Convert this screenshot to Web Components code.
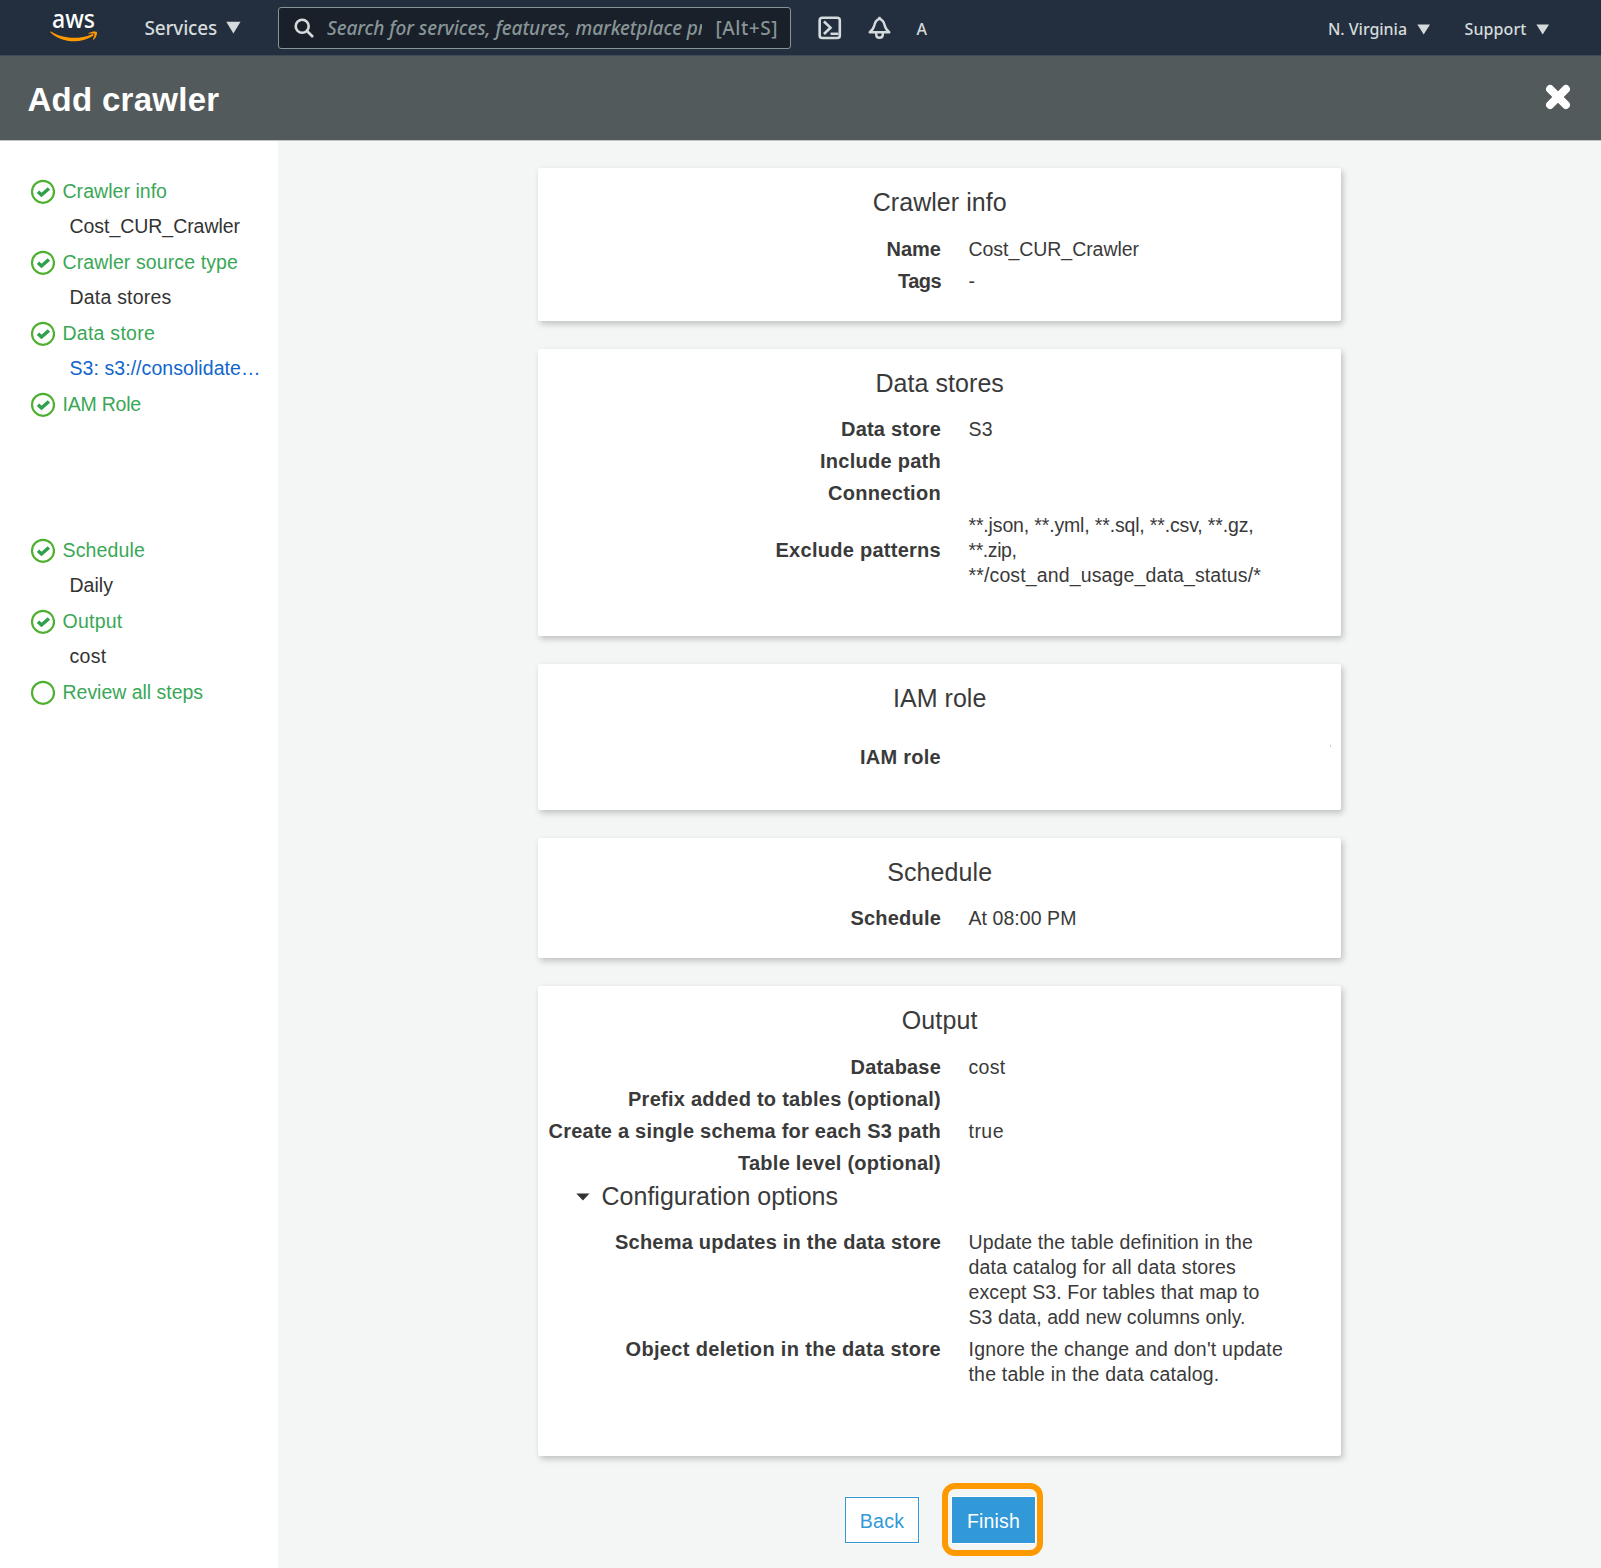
<!DOCTYPE html>
<html lang="en">
<head>
<meta charset="utf-8">
<title>Add crawler</title>
<style>
html,body{margin:0;padding:0;background:#f4f6f6}
body{font-family:"Liberation Sans",Arial,sans-serif;font-size:19.5px;line-height:25px;color:#3a3a3a}
</style>
</head>
<body>
<crawler-page></crawler-page>
<script>
function define(name, html, setup) {
  customElements.define(name, class extends HTMLElement {
    connectedCallback() {
      if (this.shadowRoot) return;
      const t = document.createElement('template');
      t.innerHTML = typeof html === 'function' ? html(this) : html;
      this.attachShadow({mode: 'open'}).appendChild(t.content.cloneNode(true));
      if (setup) setup(this);
    }
  });
}

define('crawler-page', `
<style>
:host{display:flex;flex-direction:column;width:1601px;height:1568px;overflow:hidden}
.body{display:flex;flex:1;min-height:0}
main{flex:1;display:flex;flex-direction:column;padding:27px 0 0 260px;gap:28px;background:#f4f6f6}
.actions{display:flex;align-items:center;padding-left:307px;margin-top:-1px;height:73px;gap:23px}
</style>
<top-nav></top-nav>
<page-header></page-header>
<div class="body">
  <step-list>
    <step-item label="Crawler info" w="104.5" sub="Cost_CUR_Crawler" sw="170.5"></step-item>
    <step-item label="Crawler source type" w="175.5" sub="Data stores" sw="102"></step-item>
    <step-item label="Data store" w="92.5" sub="S3: s3://consolidate…" sw="191" link></step-item>
    <step-item label="IAM Role" w="78.5" style="height:146px"></step-item>
    <step-item label="Schedule" w="82.5" sub="Daily" sw="43.5"></step-item>
    <step-item label="Output" w="60" sub="cost" sw="37"></step-item>
    <step-item label="Review all steps" w="140.5" open></step-item>
  </step-list>
  <main>
    <review-card heading="Crawler info" w="134" style="height:153px">
      <detail-row label="Name" w="54.5"><fit-text w="170.5">Cost_CUR_Crawler</fit-text></detail-row>
      <detail-row label="Tags" w="43"><fit-text>-</fit-text></detail-row>
    </review-card>
    <review-card heading="Data stores" w="128.5" style="height:287px;--head-gap:19px">
      <detail-row label="Data store" w="100"><fit-text w="24.5">S3</fit-text></detail-row>
      <detail-row label="Include path" w="121"></detail-row>
      <detail-row label="Connection" w="113"></detail-row>
      <detail-row label="Exclude patterns" w="165.5" middle><fit-text w="285">**.json, **.yml, **.sql, **.csv, **.gz,</fit-text><fit-text w="48">**.zip,</fit-text><fit-text w="292.5">**/cost_and_usage_data_status/*</fit-text></detail-row>
    </review-card>
    <review-card heading="IAM role" w="93.5" style="height:146px;--head-gap:32px">
      <detail-row label="IAM role" w="81" speck></detail-row>
    </review-card>
    <review-card heading="Schedule" w="105" style="height:120px;--head-gap:19px">
      <detail-row label="Schedule" w="90.5"><fit-text w="108">At 08:00 PM</fit-text></detail-row>
    </review-card>
    <review-card heading="Output" w="76" style="height:470px">
      <detail-row label="Database" w="90.5"><fit-text w="37">cost</fit-text></detail-row>
      <detail-row label="Prefix added to tables (optional)" w="313"></detail-row>
      <detail-row label="Create a single schema for each S3 path" w="392.5"><fit-text w="35.5">true</fit-text></detail-row>
      <detail-row label="Table level (optional)" w="203"></detail-row>
      <config-toggle></config-toggle>
      <detail-row label="Schema updates in the data store" w="326"><fit-text w="284.500">Update the table definition in the</fit-text><fit-text w="267.500">data catalog for all data stores</fit-text><fit-text w="291">except S3. For tables that map to</fit-text><fit-text w="277">S3 data, add new columns only.</fit-text></detail-row>
      <detail-row label="Object deletion in the data store" w="315.5"><fit-text w="314.500">Ignore the change and don't update</fit-text><fit-text w="251">the table in the data catalog.</fit-text></detail-row>
    </review-card>
    <div class="actions">
      <action-button style="width:74px"><fit-text w="44.5">Back</fit-text></action-button>
      <action-button primary><fit-text w="53">Finish</fit-text></action-button>
    </div>
  </main>
</div>`);

define('top-nav', `
<style>
:host{display:flex;height:55px;background:#232f3e;border-bottom:1px solid #3e4a55;box-sizing:content-box;color:#d5dbdb;
 font-family:"Noto Sans","Open Sans",sans-serif;font-weight:500;font-size:19px;line-height:24px;align-items:center}
.logo{display:block;margin-left:50px;width:50px;flex:none}
svg{display:block;flex:none}
.services{margin-left:44.5px}
.search{display:flex;align-items:center;box-sizing:border-box;width:513px;height:42px;margin:1px 0 0 37px;border:1.5px solid #879596;border-radius:3px;background:#1a202a;color:#879596;padding-left:15px;flex:none}
.ph{width:374.500px;margin-left:12px;overflow:hidden;white-space:nowrap;font-style:italic}
.key{margin-left:14px}
.small{font-size:16px;margin-top:2px}
</style>
<svg class="logo" height="55" viewBox="0 0 50 55">
 <text x="2" y="28" font-family="Noto Sans, Open Sans, sans-serif" font-weight="500" font-size="25" textLength="43" lengthAdjust="spacingAndGlyphs" fill="#fff">aws</text>
 <path d="M1 31.6C10 38 28 40.5 41.8 34.2C43.5 33.6 44.3 35 42.8 36C30 44.5 10.500 42.500 .5 32.500C0 31.700 .3 31.200 1 31.600Z" fill="#ff9900"/>
 <path d="M38.600 33.100C41.500 31.200 46 31 46.800 31.900C47.500 32.900 46.500 37.200 43.700 39.600C43.200 40 42.800 39.700 43 39.100C43.800 37.200 44.900 34.600 44.300 33.900C43.700 33.200 41 33.500 39.100 33.800C38.400 33.900 38.100 33.500 38.600 33.100Z" fill="#ff9900"/>
</svg>
<fit-text class="services" w="72.500">Services</fit-text>
<svg style="margin-left:9px" width="15" height="13" viewBox="0 0 15 13"><path d="M.3 .7H14.500L7.400 12.500Z" fill="#d5dbdb"/></svg>
<div class="search">
 <svg width="21" height="21" viewBox="0 0 21 21" fill="none" stroke="#d5dbdb" stroke-width="2.600"><circle cx="8.200" cy="8.200" r="6.500"/><path d="M13 13L19 19"/></svg>
 <div class="ph"><fit-text w="378.500">Search for services, features, marketplace pr</fit-text></div>
 <fit-text class="key" w="62.500">[Alt+S]</fit-text>
</div>
<svg style="margin-left:27px" width="24" height="24" viewBox="0 0 23 24" preserveAspectRatio="none" fill="none" stroke="#d5dbdb" stroke-width="2.500"><rect x="1.600" y="1.700" width="19.300" height="20.300" rx="2.600"/><path d="M5.700 5.500L12 11.700L5.700 18" stroke-width="2.500"/><path d="M12 17.800H19.500" stroke-width="2.500"/></svg>
<svg style="margin-left:26px" width="24" height="24" viewBox="0 0 24 24" fill="none" stroke="#d5dbdb" stroke-width="2.400" stroke-linejoin="round"><path d="M1.700 16.300C4.600 14.200 5.900 11.700 6.600 8.500C7.200 5.500 9.200 3.600 11.500 2.600C13.800 3.600 15.800 5.500 16.400 8.500C17.100 11.700 18.400 14.200 21.300 16.300Z"/><path d="M11.500 .8V3"/><path d="M8.200 17V18.500C8.200 22.900 14.800 22.900 14.800 18.500V17"/></svg>
<fit-text class="small" style="margin-left:24.500px" w="11.500">A</fit-text>
<fit-text class="small" style="margin-left:400px" w="79">N. Virginia</fit-text>
<svg style="margin-left:10px;margin-top:3px" width="14" height="11" viewBox="0 0 14 11"><path d="M.4 .5H13L6.700 10.600Z" fill="#d5dbdb"/></svg>
<fit-text class="small" style="margin-left:33.500px" w="62">Support</fit-text>
<svg style="margin-left:9.500px;margin-top:3px" width="14" height="11" viewBox="0 0 14 11"><path d="M.4 .5H13L6.700 10.600Z" fill="#d5dbdb"/></svg>
`);

define('page-header', `
<style>
:host{display:flex;align-items:center;justify-content:space-between;height:84px;padding:0 29px 0 27.500px;background:#525a5b;border-bottom:1px solid #bfc4c4}
h1{margin:4px 0 0;font-size:33px;line-height:40px;font-weight:700;color:#fff}
svg{display:block;margin-bottom:2px}
</style>
<h1><fit-text w="192">Add crawler</fit-text></h1>
<svg width="28" height="28" viewBox="0 0 28 28"><path d="M6 6L22 22M22 6L6 22" stroke="#fff" stroke-width="7.800" stroke-linecap="round"/><path d="M5 5L23 23M23 5L5 23" stroke="#fff" stroke-width="7.800"/></svg>`);

define('step-list', `
<style>:host{display:block;box-sizing:border-box;width:278px;flex:none;background:#fff;padding-top:38px}</style><slot></slot>`);

define('step-item', el => `
<style>
:host{display:block;height:71px}
.head{display:flex;align-items:center;height:25px;padding-left:30px;gap:7.500px;color:#3aa757}
.sub{margin:10px 0 0 69.500px;height:25px;color:${el.hasAttribute('link') ? '#1166cc' : '#333'}}
svg{display:block}
</style>
<div class="head">
<svg width="25" height="25" viewBox="0 0 25 25" fill="none"><circle cx="13" cy="12.800" r="11" stroke="#4fb030" stroke-width="2.200"/>${el.hasAttribute('open') ? '' : '<path d="M8 12.700L11.500 16L18.900 9.500" stroke="#2fa04c" stroke-width="3.500"/>'}</svg>
<fit-text w="${el.getAttribute('w')}">${el.getAttribute('label')}</fit-text></div>
${el.hasAttribute('sub') ? `<div class="sub"><fit-text w="${el.getAttribute('sw')}">${el.getAttribute('sub')}</fit-text></div>` : ''}`);

define('review-card', el => `
<style>
:host{display:block;box-sizing:border-box;width:803.400px;flex:none;background:#fff;border-radius:2px;box-shadow:2px 3px 6px 0 rgba(0,0,0,.22);padding-top:19px}
h2{margin:0 0 var(--head-gap,20px);height:30px;display:flex;justify-content:center;font-size:25px;line-height:30px;font-weight:400}
</style>
<h2><fit-text w="${el.getAttribute('w')}">${el.getAttribute('heading')}</fit-text></h2><slot></slot>`);

define('detail-row', el => `
<style>
:host{display:flex;min-height:25px;margin-bottom:7px;align-items:${el.hasAttribute('middle') ? 'center' : 'flex-start'}}
.label{width:403px;flex:none;display:flex;justify-content:flex-end;font-weight:700;font-size:20px}
.value{margin-left:27.500px;flex:1;display:flex;flex-direction:column;align-items:flex-start}
.speck{width:1px;height:2px;background:#b5cfe6;margin:0 10px 0 0}
</style>
<div class="label"><fit-text w="${el.getAttribute('w')}">${el.getAttribute('label')}</fit-text></div>
<div class="value"><slot></slot></div>${el.hasAttribute('speck') ? '<span class="speck"></span>' : ''}`);

define('config-toggle', `
<style>
:host{display:flex;align-items:center;height:35px;margin:-4px 0 16px;padding-left:37.500px;gap:12px;font-size:25px;line-height:35px}
svg{display:block}
</style>
<svg width="14" height="8" viewBox="0 0 14 8"><path d="M.3 .5H13.500L6.900 7.500Z" fill="#333"/></svg>
<fit-text w="236.500">Configuration options</fit-text>`);

define('action-button', el => el.hasAttribute('primary') ? `
<style>
:host{display:flex;box-sizing:border-box;width:101px;height:73px;border:6px solid #ff9900;border-radius:13px;align-items:center;justify-content:center}
button{all:unset;display:flex;justify-content:center;width:83px;height:46px;line-height:48px;margin:1px 0 0 2px;background:#3199d8;color:#fff;outline:1px solid #fff}
</style><button><slot></slot></button>` : `
<style>
:host{display:block;margin-top:1px}
button{all:unset;display:flex;justify-content:center;box-sizing:border-box;width:100%;height:46px;line-height:46px;border:1.500px solid #3199d8;background:#fff;color:#3199d8;outline:1px solid rgba(255,255,255,.6)}
</style><button><slot></slot></button>`);

/* Text run tracked to a given advance width. */
define('fit-text', '<style>:host{display:inline-block;white-space:nowrap;flex:none}</style><slot></slot>', el => {
  const w = parseFloat(el.getAttribute('w'));
  if (!w) return;
  const gap = (w - el.getBoundingClientRect().width) / el.textContent.length;
  el.style.letterSpacing = gap.toFixed(4) + 'px';
});
</script>
</body>
</html>
